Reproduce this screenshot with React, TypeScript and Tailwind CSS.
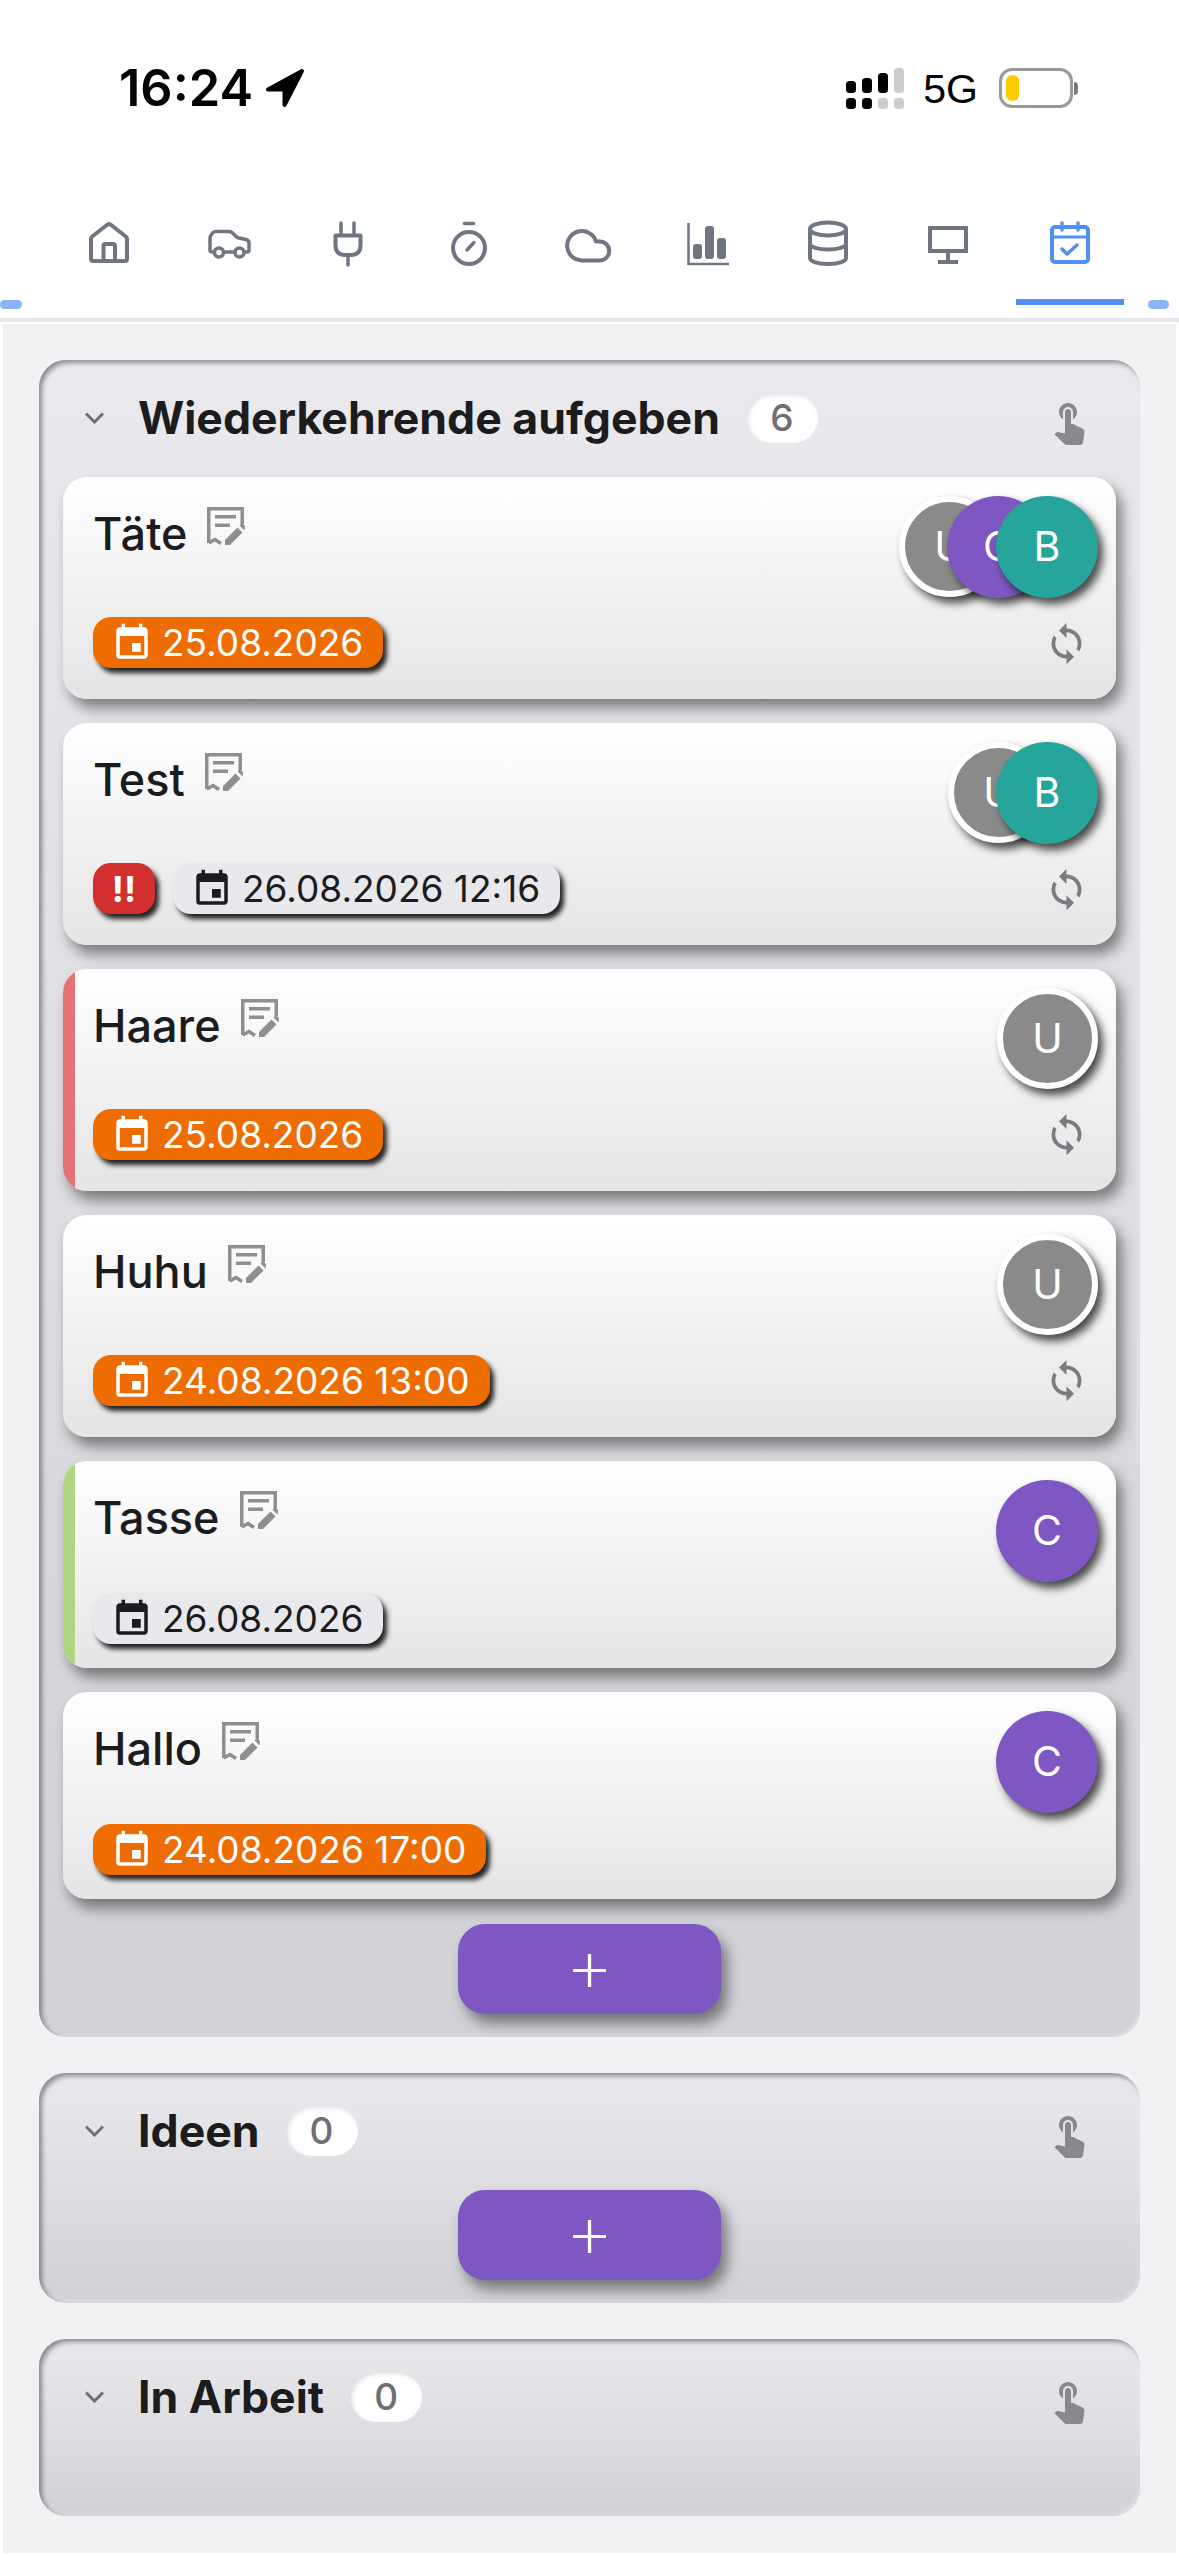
import React from "react";
import { MdEvent, MdSync, MdTouchApp } from "react-icons/md";

type Chip = "orange" | "plain";

interface CardData {
  title: string;
  date: string;
  chip: Chip;
  people: string[];
  urgent?: boolean;
  repeat?: boolean;
  strip?: "red" | "green";
}

const cards: CardData[] = [
  { title: "Täte", date: "25.08.2026", chip: "orange", people: ["U", "C", "B"], repeat: true },
  { title: "Test", date: "26.08.2026 12:16", chip: "plain", people: ["U", "B"], repeat: true, urgent: true },
  { title: "Haare", date: "25.08.2026", chip: "orange", people: ["U"], repeat: true, strip: "red" },
  { title: "Huhu", date: "24.08.2026 13:00", chip: "orange", people: ["U"], repeat: true },
  { title: "Tasse", date: "26.08.2026", chip: "plain", people: ["C"], strip: "green" },
  { title: "Hallo", date: "24.08.2026 17:00", chip: "orange", people: ["C"] },
];

const HomeIcon = () => (
  <svg viewBox="0 0 48 48" className="w-[48px] h-[48px]" fill="none" stroke="currentColor" strokeWidth="4" strokeLinejoin="round">
    <path d="M7 19Q7 17.5 8.2 16.5L23.5 4.5Q25 3.5 26.5 4.5L41.8 16.5Q43 17.5 43 19V39Q43 41 41 41H9Q7 41 7 39Z" />
    <path d="M19.5 41V26Q19.5 24 21.5 24H29Q31 24 31 26V41" />
  </svg>
);

const CarIcon = () => (
  <svg viewBox="0 0 48 48" className="w-[48px] h-[48px]" fill="none" stroke="currentColor" strokeWidth="3.5" strokeLinecap="round">
    <path d="M10 32H8Q6 32 6 30V19Q6 16 8 13.5Q9.5 11.5 12 11.5H25Q27 11.5 28.5 13L32 16.5Q33 17.5 35 18L42 19.5Q45 20.5 45 23V30Q45 32 43 32H41M20 32H31" />
    <circle cx="15" cy="32.5" r="4.5" />
    <circle cx="35.5" cy="32.5" r="4.5" />
  </svg>
);

const PlugIcon = () => (
  <svg viewBox="0 0 48 48" className="w-[48px] h-[48px]" fill="none" stroke="currentColor" strokeWidth="3.5" strokeLinecap="round" strokeLinejoin="round">
    <path d="M17 3V15M30 3V15M24 35V45" />
    <path d="M11.5 15.5H36.5V25Q36.5 35 27 35H21Q11.5 35 11.5 25Z" strokeWidth="4" />
  </svg>
);

const TimerIcon = () => (
  <svg viewBox="0 0 48 48" className="w-[48px] h-[48px]" fill="none" stroke="currentColor" strokeWidth="4" strokeLinecap="round">
    <circle cx="25" cy="28" r="16" />
    <path d="M20.5 3.5H29.5" strokeWidth="3.5" />
    <path d="M23 30L30 22.5" strokeWidth="3.5" />
  </svg>
);

const CloudIcon = () => (
  <svg viewBox="0 0 48 48" className="w-[48px] h-[48px]" fill="none" stroke="currentColor" strokeWidth="1.9" strokeLinejoin="round">
    <path transform="translate(-1 0.5) scale(2.1)" d="M17.5 19H9a7 7 0 1 1 6.71-9h1.79a4.5 4.5 0 1 1 0 9Z" />
  </svg>
);

const BarsIcon = () => (
  <svg viewBox="0 0 48 48" className="w-[48px] h-[48px]" fill="currentColor">
    <path d="M4.5 3V44H45" fill="none" stroke="currentColor" strokeWidth="2.5" />
    <rect x="9" y="24" width="9" height="15" rx="3" />
    <rect x="21" y="6" width="9" height="33" rx="3" />
    <rect x="33" y="18" width="9" height="21" rx="3" />
  </svg>
);

const DatabaseIcon = () => (
  <svg viewBox="0 0 48 48" className="w-[48px] h-[48px]" fill="none" stroke="currentColor" strokeWidth="4">
    <ellipse cx="24" cy="9" rx="18" ry="6.5" />
    <path d="M6 9V38C6 41.6 14 44 24 44C34 44 42 41.6 42 38V9" />
    <path d="M6 23.5C6 27 14 29.5 24 29.5C34 29.5 42 27 42 23.5" />
  </svg>
);

const MonitorIcon = () => (
  <svg viewBox="0 0 48 48" className="w-[48px] h-[48px]" fill="none" stroke="currentColor" strokeWidth="4">
    <rect x="6" y="8" width="36" height="23" />
    <path d="M24 33V41M14 42H34" />
  </svg>
);

const CalendarCheckIcon = () => (
  <svg viewBox="0 0 48 48" className="w-[48px] h-[48px]" fill="none" stroke="currentColor" strokeWidth="4" strokeLinecap="round" strokeLinejoin="round">
    <rect x="6" y="7" width="36" height="35" rx="3" />
    <path d="M16 3V10M32 3V10" strokeWidth="3.5" />
    <path d="M6 17H42" strokeWidth="3" />
    <path d="M16 29L21 34L31 25" strokeWidth="3.5" />
  </svg>
);

const tabs = [HomeIcon, CarIcon, PlugIcon, TimerIcon, CloudIcon, BarsIcon, DatabaseIcon, MonitorIcon, CalendarCheckIcon];

const NoteIcon = () => (
  <svg viewBox="0 0 38 38" className="w-[38px] h-[38px] shrink-0 text-[#8e8e93]" fill="currentColor">
    <path d="M1.75 36V1.75H35.25V17" fill="none" stroke="currentColor" strokeWidth="3.5" />
    <path d="M1.75 36L8 32.5L14 36.5" fill="none" stroke="currentColor" strokeWidth="3.5" />
    <rect x="8" y="8" width="21" height="3.5" />
    <rect x="8" y="16.5" width="15" height="3.5" />
    <path d="M18 38V33L30.5 20.5L35.5 25.5L23 38Z" />
    <path d="M32.5 18.5L35 16L38 19L37.5 23.5Z" />
  </svg>
);

const Signal = () => (
  <svg viewBox="0 0 58 41" className="w-[58px] h-[41px]">
    <rect x="0" y="13" width="10" height="12" rx="3.5" fill="#000" />
    <rect x="16" y="10" width="10" height="15" rx="3.5" fill="#000" />
    <rect x="32" y="5" width="10" height="20" rx="3.5" fill="#000" />
    <rect x="48" y="0" width="10" height="25" rx="3.5" fill="#ccc" />
    <rect x="0" y="30" width="10" height="11" rx="3.5" fill="#000" />
    <rect x="16" y="30" width="10" height="11" rx="3.5" fill="#000" />
    <rect x="32" y="30" width="10" height="11" rx="3.5" fill="#ccc" />
    <rect x="48" y="30" width="10" height="11" rx="3.5" fill="#ccc" />
  </svg>
);

const Avatar = ({ letter }: { letter: string }) => {
  const tone =
    letter === "U"
      ? "bg-[#8a8a8a] border-[6px] border-white w-[101px] h-[101px]"
      : letter === "C"
        ? "bg-[#7e57c2] w-[102px] h-[102px]"
        : "bg-[#26a69a] w-[102px] h-[102px]";
  return (
    <div className={`${tone} rounded-full flex items-center justify-center text-white text-[41px] -ml-[53px] first:ml-0 shadow-[5px_6px_8px_rgba(0,0,0,0.7)]`}>
      {letter}
    </div>
  );
};

const Card = ({ card }: { card: CardData }) => {
  const size = card.repeat ? "h-[222px] pb-[31px]" : "h-[207px] pb-[24px]";
  const chipTone = card.chip === "orange" ? "bg-[#ef6c00] text-white" : "bg-[#e8e8ed] text-[#1c1c1e]";
  return (
    <div className={`${size} relative overflow-hidden flex justify-between pl-[30px] rounded-[24px] bg-linear-to-b from-white to-[#e5e5e5]`}>
      {card.strip === "red" && <div className="absolute left-0 top-0 bottom-0 w-[12px] bg-[#e57373]" />}
      {card.strip === "green" && <div className="absolute left-0 top-0 bottom-0 w-[12px] bg-[#aed581]" />}
      <div className="flex flex-col justify-between pt-[30px]">
        <div className="flex items-start gap-[20px] text-[45px] leading-[50px] font-medium text-[#1c1c1e]">
          <span className="pt-[2px]">{card.title}</span>
          <NoteIcon />
        </div>
        <div className="flex gap-[18px]">
          {card.urgent && (
            <div className="w-[62px] h-[51px] rounded-[18px] bg-[#d32f2f] text-white text-[36px] font-bold flex items-center justify-center shadow-[4px_5px_5px_rgba(0,0,0,0.85)]">
              !!
            </div>
          )}
          <div className={`${chipTone} h-[51px] rounded-[18px] pl-[18px] pr-[20px] flex items-center gap-[9px] text-[37px] shadow-[4px_5px_5px_rgba(0,0,0,0.85)]`}>
            <MdEvent size={42} />
            <span>{card.date}</span>
          </div>
        </div>
      </div>
      <div className="flex flex-col items-end pt-[19px] pr-[18px]">
        <div className="flex">
          {card.people.map((p) => (
            <Avatar key={p} letter={p} />
          ))}
        </div>
        {card.repeat && <MdSync size={45} className="mt-[23px] mr-[9px] text-[#7b7b82]" />}
      </div>
    </div>
  );
};

const CardShell = ({ card }: { card: CardData }) => (
  <div className="rounded-[24px] shadow-[6px_9px_14px_rgba(0,0,0,0.45)]">
    <Card card={card} />
  </div>
);

const AddButton = () => (
  <button className="w-[263px] h-[90px] mx-auto pb-[10px] rounded-[27px] bg-[#7e57c2] text-white text-[76px] leading-none font-extralight flex items-center justify-center shadow-[6px_9px_14px_rgba(0,0,0,0.45)]">
    +
  </button>
);

const Panel = ({ title, count, className, children }: { title: string; count: number; className: string; children?: React.ReactNode }) => (
  <section className={`${className} rounded-[27px] px-[24px] pt-[33px] bg-linear-to-b from-[#e9e9ee] to-[#d1d1d6] shadow-[inset_3px_3px_5px_rgba(0,0,0,0.4),inset_-2px_-2px_4px_rgba(255,255,255,0.35)]`}>
    <div className="flex items-center h-[50px]">
      <svg viewBox="0 0 19 12" className="w-[19px] h-[12px] ml-[22px] mr-[34px] text-[#6f6f78]" fill="none" stroke="currentColor" strokeWidth="3">
        <path d="M1 1.5L9.5 10L18 1.5" />
      </svg>
      <h2 className="text-[44.6px] font-bold leading-none text-[#1c1c1e]">{title}</h2>
      <span className="ml-[26px] w-[72px] h-[50px] rounded-[25px] bg-white flex items-center justify-center text-[37px] font-medium text-[#6e6e73] shadow-[inset_2px_2px_4px_rgba(0,0,0,0.12)]">
        {count}
      </span>
      <MdTouchApp size={48} className="ml-auto mr-[23px] mt-[6px] text-[#88888f]" />
    </div>
    {children}
  </section>
);

const App: React.FC = () => {
  return (
    <div className="relative w-[1179px] h-[2556px] bg-white font-['Inter',sans-serif]">
      <header className="h-[322px] border-b-[4px] border-[#e5e7eb]">
        <div className="flex items-center justify-between h-[56px] pl-[119px] pr-[101px] translate-y-[60px]">
          <div className="flex items-center gap-[12px]">
            <span className="text-[50.5px] font-semibold text-black leading-none">16:24</span>
            <svg viewBox="0 0 40 40" className="w-[40px] h-[40px]">
              <path d="M37 3L3 21.5H19.5V37Z" fill="#000" stroke="#000" strokeWidth="4" strokeLinejoin="round" />
            </svg>
          </div>
          <div className="flex items-center">
            <Signal />
            <span className="ml-[19px] pt-[2px] text-[41px] text-black leading-none font-['Liberation_Sans',sans-serif]">5G</span>
            <div className="ml-[21px] flex items-center">
              <div className="w-[74px] h-[40px] rounded-[13px] border-[3px] border-[#999] p-[4px]">
                <div className="w-[13px] h-full rounded-[6px] bg-[#ffcc00]" />
              </div>
              <div className="w-[4px] h-[13px] rounded-r-[4px] bg-[#777] ml-[1px]" />
            </div>
          </div>
        </div>
        <nav className="flex gap-[12px] pl-[54px] pt-[154px]">
          {tabs.map((Icon, i) => {
            const active = i === tabs.length - 1;
            return (
              <div key={i} className={`${active ? "ml-[2px] text-[#4f8ff7] border-[#4f8ff7]" : "text-[#6f7682] border-transparent"} w-[108px] h-[95px] pt-[10px] border-b-[6px] flex justify-center`}>
                <Icon />
              </div>
            );
          })}
        </nav>
      </header>
      <div className="absolute left-0 top-[300px] w-[22px] h-[9px] rounded-full bg-[#8ab4f8]" />
      <div className="absolute left-[1148px] top-[300px] w-[21px] h-[9px] rounded-full bg-[#8ab4f8]" />
      <main className="mx-[3px] mt-[2px] bg-[#f2f2f5] px-[36px] pt-[36px] pb-[37px] flex flex-col gap-[36px]">
        <Panel title="Wiederkehrende aufgeben" count={6} className="pb-[23px]">
          <div className="mt-[34px] flex flex-col gap-[24px]">
            {cards.map((c) => (
              <CardShell key={c.title} card={c} />
            ))}
          </div>
          <div className="mt-[25px] flex">
            <AddButton />
          </div>
        </Panel>
        <Panel title="Ideen" count={0} className="pb-[23px]">
          <div className="mt-[34px] flex">
            <AddButton />
          </div>
        </Panel>
        <Panel title="In Arbeit" count={0} className="pb-[94px]" />
      </main>
    </div>
  );
};

export default App;
